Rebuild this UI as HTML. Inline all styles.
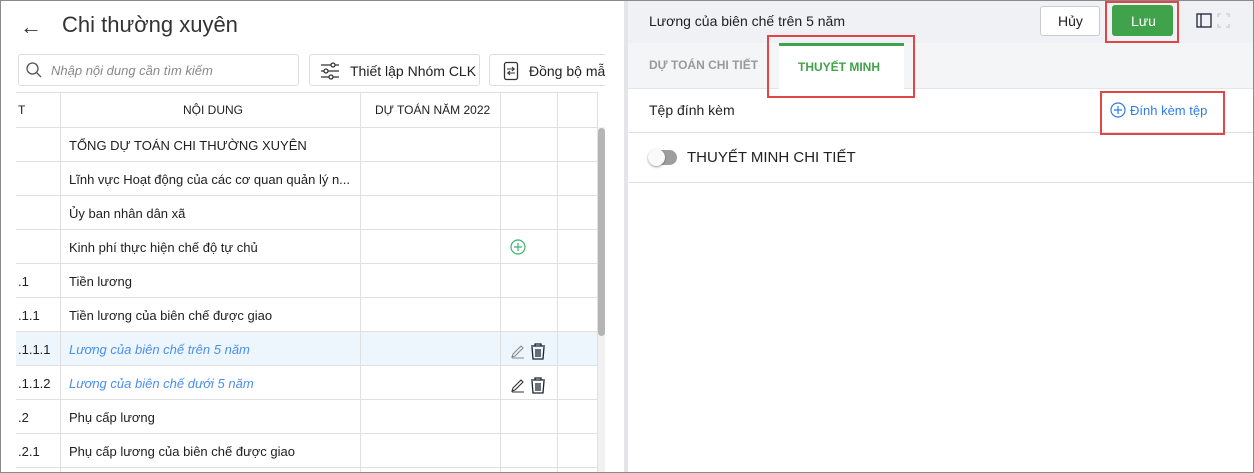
<!DOCTYPE html>
<html><head><meta charset="utf-8"><style>
*{box-sizing:border-box;margin:0;padding:0}
body{width:1254px;height:473px;overflow:hidden;font-family:"Liberation Sans",sans-serif;background:#fff;position:relative;color:#212121}
.abs{position:absolute}
.frame{position:absolute;left:0;top:0;width:1254px;height:473px;border:1px solid #8a8a8a;pointer-events:none;z-index:10}
.t{position:absolute;font-size:13px;white-space:nowrap}
.hl{position:absolute;height:1px;background:#e0e0e0}
.vl{position:absolute;width:1px;background:#e0e0e0}
</style></head><body>
<!-- left -->
<div class="t" style="left:20px;top:14px;font-size:22px;color:#333">←</div>
<div class="t" style="left:62px;top:12px;font-size:22px;color:#333;font-weight:500">Chi thường xuyên</div>
<div class="abs" style="left:18px;top:54px;width:281px;height:32px;border:1px solid #ddd;border-radius:3px"></div>
<svg class="abs" style="left:25px;top:61px" width="18" height="18" viewBox="0 0 18 18"><circle cx="7.5" cy="7.5" r="5.5" fill="none" stroke="#555" stroke-width="1.3"/><line x1="11.5" y1="11.5" x2="16" y2="16" stroke="#555" stroke-width="1.3"/></svg>
<div class="t" style="left:51px;top:63px;color:#888;font-style:italic">Nhập nội dung cần tìm kiếm</div>
<div class="abs" style="left:309px;top:54px;width:171px;height:32px;border:1px solid #ddd;border-radius:3px"></div>
<svg class="abs" style="left:320px;top:62px" width="20" height="18" viewBox="0 0 20 18"><g stroke="#333" stroke-width="1.3" fill="#fff"><line x1="1" y1="3" x2="19" y2="3"/><line x1="1" y1="9" x2="19" y2="9"/><line x1="1" y1="15" x2="19" y2="15"/><circle cx="13" cy="3" r="2"/><circle cx="6" cy="9" r="2"/><circle cx="11" cy="15" r="2"/></g></svg>
<div class="t" style="left:350px;top:63px;font-size:14px">Thiết lập Nhóm CLK</div>
<div class="abs" style="left:489px;top:54px;width:130px;height:32px;border:1px solid #ddd;border-right:none;border-radius:3px 0 0 3px"></div>
<svg class="abs" style="left:503px;top:61px" width="16" height="20" viewBox="0 0 16 20"><rect x="1.5" y="1.5" width="13" height="17" rx="2" fill="none" stroke="#333" stroke-width="1.3"/><path d="M4 8h8M9 6l2 2-2 2M12 12H4M7 10l-2 2 2 2" fill="none" stroke="#333" stroke-width="1.1"/></svg>
<div class="t" style="left:529px;top:63px;font-size:14px;width:76px;overflow:hidden">Đồng bộ mẫu</div>
<div class="abs" style="left:605px;top:0;width:20px;height:473px;background:#fff"></div>
<div class="abs" style="left:624px;top:0;width:4px;height:473px;background:#e3e5e8"></div>
<!-- table -->
<div class="hl" style="left:16px;top:92px;width:582px"></div>
<div class="abs" style="left:16px;top:331px;width:582px;height:34px;background:#eef6fd"></div>
<div class="hl" style="left:16px;top:127px;width:582px"></div>
<div class="hl" style="left:16px;top:161px;width:582px"></div>
<div class="hl" style="left:16px;top:195px;width:582px"></div>
<div class="hl" style="left:16px;top:229px;width:582px"></div>
<div class="hl" style="left:16px;top:263px;width:582px"></div>
<div class="hl" style="left:16px;top:297px;width:582px"></div>
<div class="hl" style="left:16px;top:331px;width:582px"></div>
<div class="hl" style="left:16px;top:365px;width:582px"></div>
<div class="hl" style="left:16px;top:399px;width:582px"></div>
<div class="hl" style="left:16px;top:433px;width:582px"></div>
<div class="hl" style="left:16px;top:467px;width:582px"></div>
<div class="vl" style="left:60px;top:92px;height:381px"></div>
<div class="vl" style="left:360px;top:92px;height:381px"></div>
<div class="vl" style="left:500px;top:92px;height:381px"></div>
<div class="vl" style="left:557px;top:92px;height:381px"></div>
<div class="vl" style="left:597px;top:92px;height:381px"></div>
<div class="abs" style="left:598px;top:127px;width:7px;height:346px;background:#f1f1f1"></div>
<div class="abs" style="left:598px;top:128px;width:7px;height:208px;background:#b5b5b5;border-radius:4px"></div>
<div class="t" style="left:18px;top:103px;font-size:12px">T</div>
<div class="t" style="left:183px;top:103px;font-size:12px">NỘI DUNG</div>
<div class="t" style="left:375px;top:103px;font-size:12px">DỰ TOÁN NĂM 2022</div>
<div class="t" style="left:69px;top:138px">TỔNG DỰ TOÁN CHI THƯỜNG XUYÊN</div>
<div class="t" style="left:69px;top:172px">Lĩnh vực Hoạt động của các cơ quan quản lý n...</div>
<div class="t" style="left:69px;top:206px">Ủy ban nhân dân xã</div>
<div class="t" style="left:69px;top:240px">Kinh phí thực hiện chế độ tự chủ</div>
<svg class="abs" style="left:510px;top:239px" width="16" height="16" viewBox="0 0 16 16"><circle cx="8" cy="8" r="7" fill="none" stroke="#3cb371" stroke-width="1.2"/><path d="M8 4v8M4 8h8" stroke="#3cb371" stroke-width="1.2"/></svg>
<div class="t" style="left:18px;top:274px">.1</div><div class="t" style="left:69px;top:274px">Tiền lương</div>
<div class="t" style="left:18px;top:308px">.1.1</div><div class="t" style="left:69px;top:308px">Tiền lương của biên chế được giao</div>
<div class="t" style="left:18px;top:342px">.1.1.1</div><div class="t" style="left:69px;top:342px;color:#4a8ef0;font-style:italic">Lương của biên chế trên 5 năm</div>
<div class="t" style="left:18px;top:376px">.1.1.2</div><div class="t" style="left:69px;top:376px;color:#4a8ef0;font-style:italic">Lương của biên chế dưới 5 năm</div>
<div class="t" style="left:18px;top:410px">.2</div><div class="t" style="left:69px;top:410px">Phụ cấp lương</div>
<div class="t" style="left:18px;top:444px">.2.1</div><div class="t" style="left:69px;top:444px">Phụ cấp lương của biên chế được giao</div>
<svg class="abs" style="left:510px;top:342px" width="40" height="18" viewBox="0 0 40 18"><path d="M2 15l1-3 8-8 2 2-8 8zM2 16h12" fill="none" stroke="#888" stroke-width="1.1"/><path d="M21 4h14M25 4V2h6v2M22 5l1 12h10l1-12M26 7v8M28 7v8M30 7v8" fill="none" stroke="#1a2233" stroke-width="1.3"/></svg>
<svg class="abs" style="left:510px;top:376px" width="40" height="18" viewBox="0 0 40 18"><path d="M2 15l1-3 8-8 2 2-8 8zM2 16h12" fill="none" stroke="#333" stroke-width="1.1"/><path d="M21 4h14M25 4V2h6v2M22 5l1 12h10l1-12M26 7v8M28 7v8M30 7v8" fill="none" stroke="#1a2233" stroke-width="1.3"/></svg>
<!-- right -->
<div class="abs" style="left:628px;top:0;width:626px;height:43px;background:#eff1f4"></div>
<div class="abs" style="left:628px;top:43px;width:626px;height:46px;background:#f4f5f6;border-bottom:1px solid #e3e5e8"></div>
<div class="t" style="left:649px;top:13px;font-size:14px">Lương của biên chế trên 5 năm</div>
<div class="abs" style="left:1040px;top:6px;width:60px;height:30px;background:#fff;border:1px solid #ccc;border-radius:3px"></div>
<div class="t" style="left:1058px;top:13px;font-size:14px">Hủy</div>
<div class="abs" style="left:1105px;top:1px;width:74px;height:42px;border:2px solid #e04646"></div>
<div class="abs" style="left:1112px;top:5px;width:61px;height:31px;background:#40a24a;border-radius:3px"></div>
<div class="t" style="left:1131px;top:13px;font-size:14px;color:#fff">Lưu</div>
<svg class="abs" style="left:1196px;top:13px" width="36" height="16" viewBox="0 0 36 16"><rect x="1" y="1" width="14" height="13" fill="none" stroke="#1a2233" stroke-width="1.3"/><line x1="5" y1="1" x2="5" y2="14" stroke="#1a2233" stroke-width="1.3"/><path d="M22 4V1h3M30 1h3v3M33 11v3h-3M25 14h-3v-3" fill="none" stroke="#ccc" stroke-width="1.3"/></svg>
<div class="t" style="left:649px;top:58px;font-size:12px;color:#9a9a9a;font-weight:bold">DỰ TOÁN CHI TIẾT</div>
<div class="abs" style="left:779px;top:43px;width:125px;height:46px;background:#fff;border-top:3px solid #40a24a"></div>
<div class="t" style="left:798px;top:60px;font-size:12px;color:#40a24a;font-weight:bold">THUYẾT MINH</div>
<div class="abs" style="left:767px;top:35px;width:148px;height:63px;border:2px solid #e04646"></div>
<div class="hl" style="left:629px;top:132px;width:625px"></div>
<div class="hl" style="left:629px;top:182px;width:625px"></div>
<div class="t" style="left:649px;top:102px;font-size:14px">Tệp đính kèm</div>
<svg class="abs" style="left:1110px;top:102px" width="16" height="16" viewBox="0 0 16 16"><circle cx="8" cy="8" r="7" fill="none" stroke="#2f7bf0" stroke-width="1.2"/><path d="M8 4v8M4 8h8" stroke="#2f7bf0" stroke-width="1.2"/></svg>
<div class="t" style="left:1130px;top:103px;font-size:13px;color:#2f7bf0">Đính kèm tệp</div>
<div class="abs" style="left:1100px;top:91px;width:125px;height:44px;border:2px solid #e04646"></div>
<div class="abs" style="left:649px;top:150px;width:28px;height:15px;background:#9e9e9e;border-radius:8px"></div>
<div class="abs" style="left:648px;top:149px;width:17px;height:17px;background:#fafafa;border-radius:50%;box-shadow:0 1px 2px rgba(0,0,0,.4)"></div>
<div class="t" style="left:687px;top:149px;font-size:15px">THUYẾT MINH CHI TIẾT</div>
<div class="frame"></div>
</body></html>
